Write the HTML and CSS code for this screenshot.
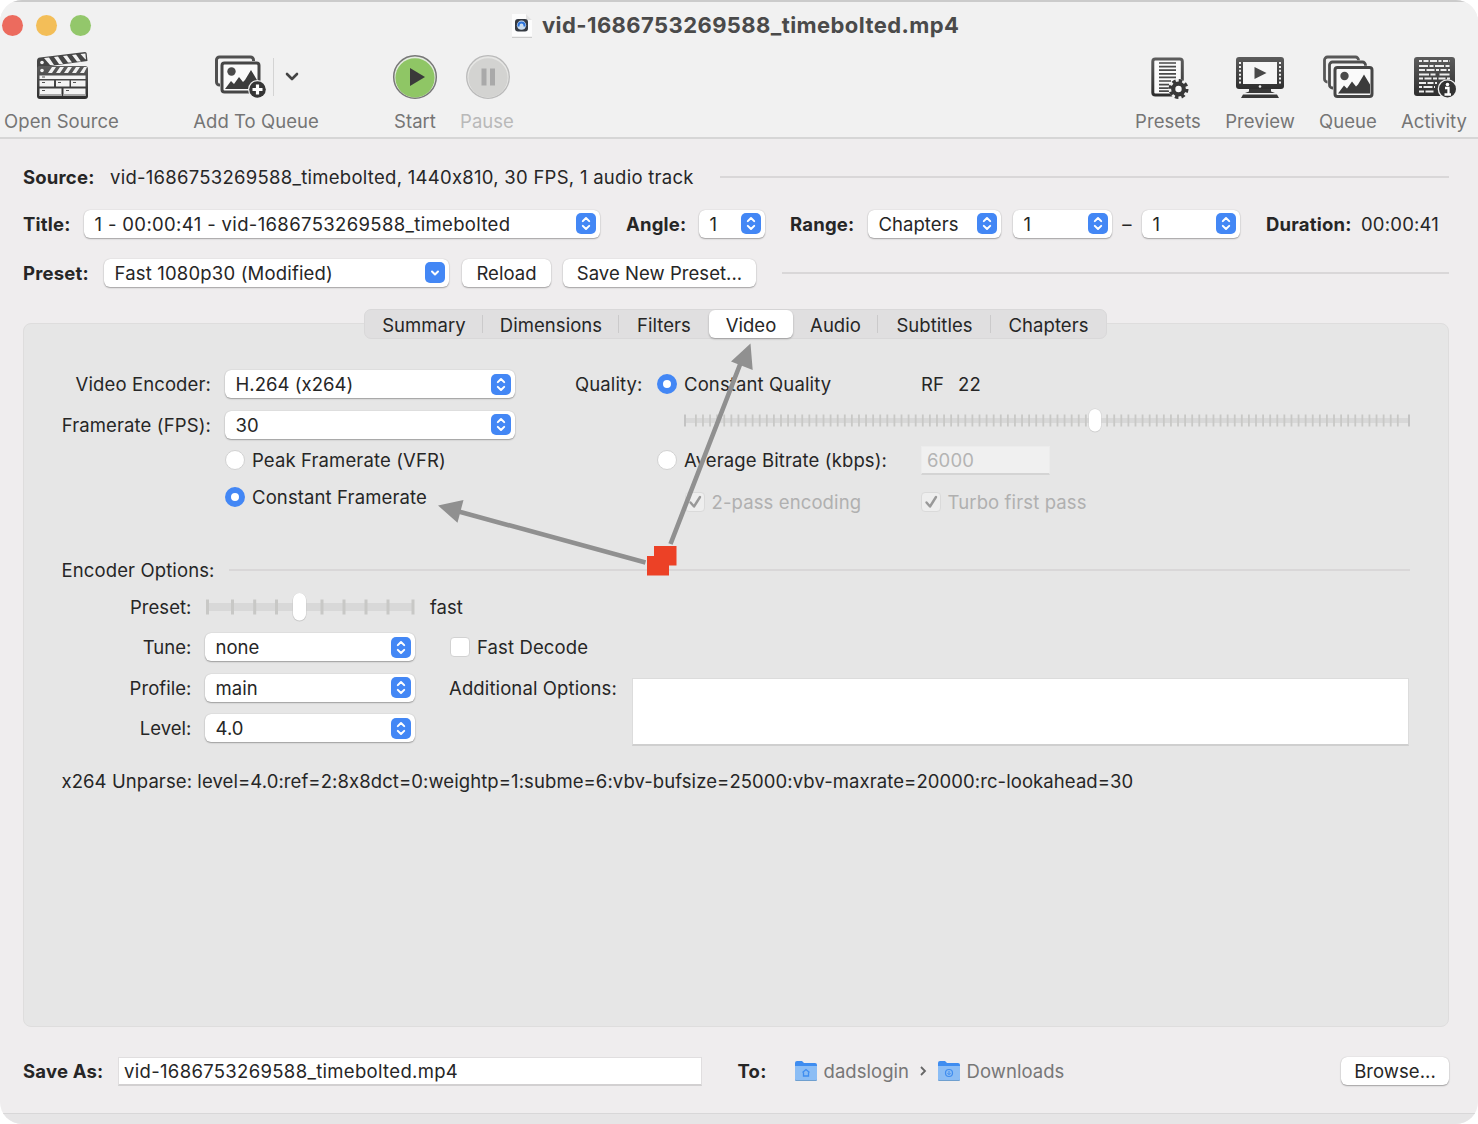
FILE: index.html
```
<!DOCTYPE html>
<html lang="en">
<head>
    <title>vid-1686753269588_timebolted.mp4</title>
    <meta charset="UTF-8">
    <link rel="stylesheet" href="styles.css">
</head>
<body>
    <!-- shared shapes -->
    <svg width="0" height="0" class="defs">
        <defs>
            <linearGradient id="dark" x1="0" y1="0" x2="0" y2="1">
                <stop offset="0" stop-color="#5c5c5c"/>
                <stop offset="1" stop-color="#2e2e2e"/>
            </linearGradient>
            <symbol id="updown" viewBox="0 0 20 20">
                <path d="M6.8 7.6 10 4.5l3.2 3.1M6.8 12.4 10 15.5l3.2-3.1" fill="none" stroke="#fff" stroke-width="2" stroke-linecap="round" stroke-linejoin="round"/>
            </symbol>
            <symbol id="down" viewBox="0 0 20 20">
                <path d="M7 9l3 3 3-3" fill="none" stroke="#fff" stroke-width="2" stroke-linecap="round" stroke-linejoin="round"/>
            </symbol>
            <symbol id="picture" viewBox="0 0 41 33">
                <rect width="41" height="33" rx="4" fill="#f1f1f1"/>
                <rect x="2" y="2" width="37" height="29" rx="2.5" fill="#fafafa" stroke="#464646" stroke-width="3"/>
                <circle cx="11.5" cy="10.5" r="4.2" fill="#4a4a4a"/>
                <path d="M5 28l6-8 3 3 5-7 4 5 2-2 6-10 6 10v9z" fill="#3c3c3c"/>
            </symbol>
            <symbol id="folder" viewBox="0 0 22 20">
                <path d="M0 2q0-2 2-2h5l2 2h11q2 0 2 2v14q0 2-2 2H2q-2 0-2-2z" fill="#3f8df0"/>
                <path d="M0 5h22v13q0 1.500-2 1.500H2q-2 0-2-1.500z" fill="#8bbdf5"/>
                <path d="M.5 19.500h21" stroke="#6f9fce"/>
            </symbol>
        </defs>
    </svg>

    <div class="window">
        <div class="toolbar">
            <div class="titlebar">
                <span class="light red"></span>
                <span class="light yellow"></span>
                <span class="light green"></span>
                <svg class="doc" width="22" height="25" viewBox="0 0 22 25">
                    <path d="M1 1h14l6 6v17H1z" fill="#fcfcfc"/>
                    <path d="M1 24.300h20" stroke="#c4c4c4"/>
                    <path d="M15 1v6h6" fill="#e4e4e4"/>
                    <rect x="4" y="6" width="13" height="12.500" rx="3" fill="#353a42"/>
                    <circle cx="10.500" cy="12.200" r="4.600" fill="#c9dcef"/>
                    <path d="M7.500 13.500v-1a3 3 0 0 1 6 0v1" fill="none" stroke="#2b72da" stroke-width="2"/>
                </svg>
                <h1>vid-1686753269588_timebolted.mp4</h1>
            </div>
            <div class="tools">
                <div class="tool open">
                    <svg width="54" height="50" viewBox="0 0 54 50">
                        <path d="M1 10q0-3 3-3.400L49 1q1.500 0 1.700 1.500L51.500 10 14 15v3H1z" fill="#454545"/>
                        <path d="M8 7l6 7h4l-5-7.500zM18 6l5 7h4l-5-7.500zM27 5l5 6.500h4l-5-7zM36 4l5 6.500h4l-5-7zM44.500 3l4.500 5 1 .5-.6-6z" fill="#f1f1f1"/>
                        <rect x="1" y="15" width="51" height="33" rx="3" fill="url(#dark)"/>
                        <path d="M12 22l4-6h4l-4 6zM20 22l4-6h4l-4 6zM28 22l4-6h4l-4 6zM36 22l4-6h4l-4 6zM44 22l4-6h3l-3 6z" fill="#f1f1f1"/>
                        <circle cx="6" cy="11.500" r="1.800" fill="#f1f1f1"/>
                        <circle cx="6" cy="19.500" r="1.800" fill="#f1f1f1"/>
                        <path d="M3.500 24.500h46v3.500h-46zM3.500 29.500H18v6H3.500zM20 29.500h13.500v6H20zM35 29.500h14.500v6H35zM3.500 37.500h22V45h-22zM27.500 37.500h22V45h-22z" fill="#f4f4f4"/>
                        <path d="M6 26h3M6 31.500h3M22 31.500h3M37 31.500h3M6 39.500h3M30 39.500h3" stroke="#555" />
                        <path d="M3.500 43h22v2h-22zM27.500 43h22v2h-22z" fill="#a8a8a8"/>
                    </svg>
                    <span>Open Source</span>
                </div>
                <div class="tool add">
                    <div class="split">
                        <svg width="54" height="46" viewBox="0 0 54 46">
                            <rect x="2.500" y="3" width="37" height="28" rx="3" fill="#f4f4f4" stroke="#505050" stroke-width="3"/>
                            <use href="#picture" x="6" y="7" width="41" height="33"/>
                            <circle cx="43.500" cy="35.500" r="9.500" fill="#f1f1f1"/>
                            <circle cx="43.500" cy="35.500" r="8.300" fill="#363636"/>
                            <path d="M43.500 30.500v10M38.500 35.500h10" stroke="#fff" stroke-width="3.200"/>
                        </svg>
                        <i class="divider"></i>
                        <svg width="14" height="10" viewBox="0 0 14 10">
                            <path d="M2 2l5 5 5-5" fill="none" stroke="#444" stroke-width="2.600" stroke-linecap="round" stroke-linejoin="round"/>
                        </svg>
                    </div>
                    <span>Add To Queue</span>
                </div>
                <div class="tool start">
                    <svg width="46" height="46" viewBox="0 0 46 46">
                        <circle cx="23" cy="23" r="21.300" fill="#e4ebdf" stroke="#777" stroke-width="1.500"/>
                        <circle cx="23" cy="23.800" r="19.600" fill="#8fc665"/>
                        <path d="M18 14v18l15-9z" fill="#3a3a3a"/>
                    </svg>
                    <span>Start</span>
                </div>
                <div class="tool pause">
                    <svg width="46" height="46" viewBox="0 0 46 46">
                        <circle cx="23" cy="23" r="21.300" fill="#e6e6e4" stroke="#bababa" stroke-width="1.300"/>
                        <circle cx="23" cy="23.800" r="19.600" fill="#d3d3d1"/>
                        <path d="M16.500 14.500h5v17h-5zM25 14.500h5v17h-5z" fill="#a9a9a9"/>
                    </svg>
                    <span>Pause</span>
                </div>
                <div class="tool presets">
                    <svg width="40" height="46" viewBox="0 0 40 46">
                        <rect x="2.800" y="5" width="29.500" height="36" rx="2.500" fill="#fafafa" stroke="url(#dark)" stroke-width="3"/>
                        <path d="M9 9h17M9 12.600h17M9 16.200h17M9 19.800h17M9 23.400h17M9 27h12M9 30.600h10M9 34.200h10M9 37.200h10" stroke="#4a4a4a" stroke-width="1.700"/>
                        <circle cx="28.500" cy="35" r="10" fill="#f1f1f1"/>
                        <circle cx="28.500" cy="35" r="8.300" fill="none" stroke="#383838" stroke-width="3.400" stroke-dasharray="3.500 3.020"/>
                        <circle cx="28.500" cy="35" r="5.300" fill="#fafafa" stroke="#383838" stroke-width="4.200"/>
                    </svg>
                    <span>Presets</span>
                </div>
                <div class="tool preview">
                    <svg width="50" height="46" viewBox="0 0 50 46">
                        <rect x="1" y="3" width="48" height="32" rx="3" fill="url(#dark)"/>
                        <rect x="8" y="8" width="34" height="22" fill="#f6f6f6"/>
                        <path d="M5 8v23M45 8v23" stroke="#f1f1f1" stroke-width="2" stroke-dasharray="2 1.900"/>
                        <path d="M19.500 13v12l12-6z" fill="#484848"/>
                        <circle cx="25" cy="32.500" r="1.300" fill="#eee"/>
                        <path d="M14 35h22v2.500l4 1.500H10l4-1.500zM8 40.500h34l2 3.500H6z" fill="#383838"/>
                    </svg>
                    <span>Preview</span>
                </div>
                <div class="tool queue">
                    <svg width="52" height="46" viewBox="0 0 52 46">
                        <rect x="2.500" y="3" width="34" height="25" rx="3" fill="#f4f4f4" stroke="#585858" stroke-width="2.800"/>
                        <rect x="5.500" y="6.200" width="40" height="29" rx="4" fill="#f1f1f1"/>
                        <rect x="7.500" y="8" width="36" height="26" rx="3" fill="#f4f4f4" stroke="#4e4e4e" stroke-width="2.800"/>
                        <use href="#picture" x="11" y="11.500" width="41" height="33"/>
                    </svg>
                    <span>Queue</span>
                </div>
                <div class="tool activity">
                    <svg width="46" height="46" viewBox="0 0 46 46">
                        <rect x="2" y="3" width="41" height="39" rx="3" fill="url(#dark)"/>
                        <path d="M7 7h31" stroke="#eee" stroke-width="1.800" stroke-dasharray="3 1.500 5 1.500 7 1.500"/>
                        <path d="M7 12h31" stroke="#eee" stroke-width="1.800" stroke-dasharray="9 1.500 4 1.500"/>
                        <path d="M7 16h31" stroke="#eee" stroke-width="1.800" stroke-dasharray="6 1.500 8 1.500 3 1.500"/>
                        <path d="M7 20.500h31" stroke="#eee" stroke-width="1.800" stroke-dasharray="10 1.500 5 4"/>
                        <path d="M7 24.500h31" stroke="#eee" stroke-width="1.800" stroke-dasharray="4 1.500 7 1.500"/>
                        <path d="M7 29h18" stroke="#eee" stroke-width="1.800" stroke-dasharray="7 1.500 6 1.500"/>
                        <path d="M7 33h16" stroke="#eee" stroke-width="1.800" stroke-dasharray="3 1.500 9 1.500"/>
                        <path d="M7 37.500h16" stroke="#eee" stroke-width="1.800" stroke-dasharray="5 1.500 8 1.500"/>
                        <circle cx="35.500" cy="35" r="9.800" fill="#f1f1f1"/>
                        <circle cx="35.500" cy="35" r="8.500" fill="#333"/>
                        <circle cx="35.500" cy="30.500" r="1.800" fill="#fff"/>
                        <path d="M33 34h3.500v6M32.500 40.500h6.500" stroke="#fff" stroke-width="2.300" fill="none"/>
                    </svg>
                    <span>Activity</span>
                </div>
            </div>
        </div>

        <div class="row source">
            <b>Source:</b>
            <span class="source-text">vid-1686753269588_timebolted, 1440x810, 30 FPS, 1 audio track</span>
            <hr>
        </div>
        <div class="row title">
            <b>Title:</b>
            <div class="select w-title">1 - 00:00:41 - vid-1686753269588_timebolted<svg><use href="#updown"/></svg></div>
            <b class="l-angle">Angle:</b>
            <div class="select w-angle">1<svg><use href="#updown"/></svg></div>
            <b class="l-range">Range:</b>
            <div class="select w-range">Chapters<svg><use href="#updown"/></svg></div>
            <div class="select w-from">1<svg><use href="#updown"/></svg></div>
            <span class="dash">–</span>
            <div class="select w-to">1<svg><use href="#updown"/></svg></div>
            <b class="l-duration">Duration:</b>
            <span class="duration">00:00:41</span>
        </div>
        <div class="row preset">
            <b>Preset:</b>
            <div class="select w-preset">Fast 1080p30 (Modified)<svg><use href="#down"/></svg></div>
            <div class="button reload">Reload</div>
            <div class="button save-new">Save New Preset...</div>
            <hr>
        </div>

        <div class="tabs">
            <span class="t1">Summary</span>
            <span class="t2">Dimensions</span>
            <span class="t3">Filters</span>
            <span class="t4 active">Video</span>
            <span class="t5">Audio</span>
            <span class="t6">Subtitles</span>
            <span class="t7">Chapters</span>
        </div>

        <div class="panel">
            <div class="video">
                <div class="left">
                    <div class="field"><label>Video Encoder:</label><div class="select">H.264 (x264)<svg><use href="#updown"/></svg></div></div>
                    <div class="field"><label>Framerate (FPS):</label><div class="select">30<svg><use href="#updown"/></svg></div></div>
                    <div class="choice vfr"><i class="radio"></i>Peak Framerate (VFR)</div>
                    <div class="choice cfr"><i class="radio on"></i>Constant Framerate</div>
                </div>
                <div class="right">
                    <div class="choice cq"><label>Quality:</label><i class="radio on"></i><span class="name">Constant Quality</span><span class="rf">RF</span><span>22</span></div>
                    <svg class="slider" width="726" height="34" viewBox="0 0 726 34">
                        <path d="M0 16.500h726" stroke="#d8d8d8" stroke-width="5"/>
                        <path d="M1 10.500v12M725 10.500v12" stroke="#c3c3c3" stroke-width="2"/>
                        <path d="M11 16.500h704" stroke="#c8c8c6" stroke-width="12" stroke-dasharray="1.800 5.290"/>
                        <rect x="404.500" y="4.500" width="13" height="24" rx="6.500" fill="#cfcfcf"/>
                        <rect x="405" y="5" width="12" height="22.500" rx="6" fill="#fff"/>
                    </svg>
                    <div class="choice abr"><label></label><i class="radio"></i><span class="name">Average Bitrate (kbps):</span><span class="input disabled">6000</span></div>
                    <div class="choice passes">
                        <i class="check"><svg width="20" height="20" viewBox="0 0 20 20"><path d="M5.500 10.500l3.500 4 6-9.500" fill="none" stroke="#999" stroke-width="2.400" stroke-linecap="round" stroke-linejoin="round"/></svg></i>
                        <span class="name">2-pass encoding</span>
                        <i class="check"><svg width="20" height="20" viewBox="0 0 20 20"><path d="M5.500 10.500l3.500 4 6-9.500" fill="none" stroke="#999" stroke-width="2.400" stroke-linecap="round" stroke-linejoin="round"/></svg></i>
                        <span>Turbo first pass</span>
                    </div>
                </div>
            </div>

            <div class="heading"><span>Encoder Options:</span><hr></div>

            <div class="options">
                <div class="left">
                    <div class="field"><label>Preset:</label>
                        <svg class="steps" width="211" height="30" viewBox="0 0 211 30">
                            <path d="M1 15h208" stroke="#d8d8d8" stroke-width="8"/>
                            <path d="M2.500 7.500v15M27.500 7.500v15M49.700 7.500v15M71.500 7.500v15M117 7.500v15M139 7.500v15M161 7.500v15M183 7.500v15M208 7.500v15" stroke="#c8c8c6" stroke-width="3"/>
                            <rect x="87.500" y="1" width="14" height="28.500" rx="7" fill="#cacaca"/>
                            <rect x="88" y="1" width="13" height="27.500" rx="6.500" fill="#fff"/>
                        </svg>
                    </div>
                    <div class="field"><label>Tune:</label><div class="select">none<svg><use href="#updown"/></svg></div></div>
                    <div class="field"><label>Profile:</label><div class="select">main<svg><use href="#updown"/></svg></div></div>
                    <div class="field"><label>Level:</label><div class="select">4.0<svg><use href="#updown"/></svg></div></div>
                </div>
                <div class="right">
                    <div class="speed">fast</div>
                    <div class="choice decode"><i class="check"></i>Fast Decode</div>
                    <div class="additional"><label>Additional Options:</label><div class="textarea"></div></div>
                </div>
            </div>

            <div class="unparse">x264 Unparse: level=4.0:ref=2:8x8dct=0:weightp=1:subme=6:vbv-bufsize=25000:vbv-maxrate=20000:rc-lookahead=30</div>
        </div>

        <div class="row save">
            <b>Save As:</b>
            <span class="input filename">vid-1686753269588_timebolted.mp4</span>
            <b class="l-to">To:</b>
            <svg class="folder" width="22" height="20" viewBox="0 0 22 20">
                <use href="#folder" width="22" height="20"/>
                <path d="M7.500 11.500 11 8.500l3.500 3M8.500 11.500v3.500h5v-3.500" fill="none" stroke="#3f8df0" stroke-width="1.300"/>
            </svg>
            <span class="crumb user">dadslogin</span>
            <svg class="arrow" width="8" height="12" viewBox="0 0 8 12"><path d="M2 2l4 4-4 4" fill="none" stroke="#666" stroke-width="1.800"/></svg>
            <svg class="folder" width="22" height="20" viewBox="0 0 22 20">
                <use href="#folder" width="22" height="20"/>
                <circle cx="11" cy="12" r="3.500" fill="none" stroke="#3f8df0" stroke-width="1.200"/>
                <path d="M11 10v3.500M9.500 12.200l1.500 1.500 1.500-1.500" fill="none" stroke="#3f8df0"/>
            </svg>
            <span class="crumb">Downloads</span>
            <div class="button browse">Browse...</div>
        </div>
        <div class="bottom"></div>

        <!-- pointers to the Video tab and Constant Framerate -->
        <svg class="pointers" width="1478" height="1124" viewBox="0 0 1478 1124">
            <path d="M670.500 544 741 362M645.500 562.500 455 510.500" stroke="#909090" stroke-width="4.600"/>
            <path d="M750.500 343.500 731 361.500 752.700 370zM438 505.500l25.500-5.500-6 22.700z" fill="#909090"/>
            <path d="M654 546h22.500v19.500H669v10h-22V556h7z" fill="#ec4126"/>
        </svg>
    </div>
</body>
</html>
```
FILE: styles.css
```
* {
    box-sizing: border-box;
}
body {
    margin: 0;
    background: #fff;
    font-family: Inter, "Liberation Sans", sans-serif;
    font-size: 18.5px;
    font-feature-settings: "calt" 0;
    letter-spacing: 0.05px;
    color: #262626;
    line-height: 28px;
    white-space: nowrap;
}
.defs {
    display: block;
}
.window {
    position: relative;
    width: 1478px;
    height: 1124px;
    overflow: hidden;
    border-radius: 22px;
    background: #efedee;
}
b {
    font-weight: 700;
    letter-spacing: 0.2px;
}
hr {
    flex: 1;
    height: 2px;
    margin: 0;
    border: 0;
    background: #d9d7d8;
}

/* toolbar */
.toolbar {
    height: 139px;
    background: #f1f1f1;
    border-top: 2px solid #cbcbcb;
    border-bottom: 2px solid #d6d6d6;
}
.titlebar {
    display: flex;
    align-items: center;
    height: 47px;
    padding-left: 2px;
}
.light {
    width: 21px;
    height: 21px;
    margin-right: 13px;
    border-radius: 50%;
}
.red { background: #ec6b5e; }
.yellow { background: #f3be58; }
.green { background: #93c76b; }
.doc {
    margin-left: 407px;
}
h1 {
    margin: 0 0 0 9px;
    font-size: 22px;
    font-weight: 700;
    letter-spacing: 0.42px;
    line-height: 26px;
    padding-bottom: 1px;
    color: #4a4a4a;
}
.tools {
    display: flex;
}
.tool {
    display: flex;
    flex-direction: column;
    align-items: center;
    height: 87px;
    color: #757575;
}
.tool svg {
    flex: none;
}
.tool > svg, .split {
    height: 50px;
    margin-top: 3px;
}
.tool span {
    margin-top: 5px;
}
.split {
    display: flex;
    align-items: center;
}
.divider {
    width: 1px;
    height: 38px;
    margin: 0 11px 0 5px;
    background: #d4d4d4;
}
.open { width: 123px; }
.tool.open svg {
    margin: 2px 0 1px 2px;
}
.add { width: 124px; margin-left: 71px; }
.start { width: 46px; margin-left: 74px; }
.pause { width: 54px; margin-left: 22px; }
.pause span { color: #b9b9b9; }
.pause svg { margin-left: 2px; }
.presets { width: 68px; margin-left: 620px; }
.presets svg { margin-left: 3px; }
.preview { width: 70px; margin-left: 23px; }
.queue { width: 60px; margin-left: 23px; }
.activity { width: 68px; margin-left: 22px; }
.activity svg { margin-left: 2px; }

/* controls */
.select, .button {
    height: 28px;
    border-radius: 6px;
    background: #fff;
    box-shadow: 0 0 1px rgba(0,0,0,.25), 0 1px 1.5px rgba(0,0,0,.3);
}
.select {
    display: flex;
    align-items: center;
    justify-content: space-between;
    padding: 0 4px 0 10.5px;
}
.select svg {
    width: 20px;
    height: 21px;
    border-radius: 5px;
    background: #4387f5;
}
.button {
    text-align: center;
}
.input {
    height: 29px;
    padding-left: 5px;
    background: #fff;
    border: 1px solid #e0dedf;
    border-bottom: 2px solid #d2d0d1;
    line-height: 26px;
}
.input.disabled {
    width: 129px;
    background: #f0f0f0;
    border-color: #ececec #ececec #d4d4d4;
    color: #b4b4b4;
}
.radio, .check {
    flex: none;
    width: 20px;
    height: 20px;
    background: #fff;
    border: 1px solid #d2d2d2;
}
.radio {
    border-radius: 50%;
}
.radio.on {
    border: 6.5px solid #4387f5;
}
.check {
    border-radius: 4px;
}
.check svg {
    display: block;
    margin: -1px;
}
.passes .check {
    background: #eeeeee;
    border-color: #dadada;
}

/* rows above the tabs */
.row {
    display: flex;
    align-items: center;
    padding: 0 29px 0 23px;
}
.source { height: 75px; }
.source b { width: 87px; }
.source-text { width: 610px; letter-spacing: 0.27px; }
.title { height: 19px; }
.title b { width: 61px; }
.w-title { width: 516px; letter-spacing: 0.35px; }
.title .l-angle { width: 73px; margin-left: 26px; }
.w-angle { width: 66px; }
.title .l-range { width: 78px; margin-left: 25px; }
.w-range { width: 133px; }
.w-from { width: 99px; margin-left: 12px; }
.dash { width: 30px; text-align: center; }
.w-to { width: 98px; }
.title .l-duration { width: 95px; margin-left: 26px; }
.duration { letter-spacing: 0.2px; }
.preset { height: 79px; }
.preset b { width: 81px; }
.w-preset { width: 345px; letter-spacing: 0.18px; }
.reload { width: 89px; margin-left: 13px; }
.save-new { width: 193px; margin: 0 26px 0 12px; }

/* tabs */
.tabs {
    position: relative;
    display: flex;
    width: 743px;
    height: 30px;
    margin: -3px 0 -16px 364px;
    background: #e0dfe0;
    border: 1px solid #d9d8d9;
    border-radius: 7px;
    z-index: 1;
}
.tabs span {
    text-align: center;
    line-height: 30px;
    background: linear-gradient(#cbcacb, #cbcacb) right center / 1px 18px no-repeat;
}
.tabs .t1 { width: 118px; }
.tabs .t2 { width: 136px; }
.tabs .t3 { width: 90px; background: none; }
.tabs .t4 { width: 84px; }
.tabs .t5 { width: 85px; }
.tabs .t6 { width: 113px; }
.tabs .t7 { width: 115px; background: none; }
.tabs .active {
    height: 28px;
    background: #fff;
    border-radius: 6px;
    box-shadow: 0 1px 2px rgba(0,0,0,.3);
}

/* panel */
.panel {
    height: 704px;
    margin: 0 29px 0 23px;
    padding: 40px 38px 0 37.5px;
    background: #e6e6e6;
    border: 1px solid #dedddd;
    border-radius: 8px;
}
.video {
    display: flex;
    height: 159px;
}
.field {
    display: flex;
    align-items: center;
    height: 40.5px;
}
.field label {
    text-align: right;
}
.choice {
    display: flex;
    align-items: center;
    letter-spacing: 0.12px;
}
.choice .radio {
    margin-right: 7px;
}
.video .left { width: 497.5px; }
.video .left label { width: 149.5px; margin-right: 14px; letter-spacing: 0.12px; }
.video .left .select { width: 290px; }
.left .choice { padding-left: 163.5px; }
.vfr { height: 30px; }
.cfr { height: 43px; }
.cq { height: 40px; }
.slider { display: block; margin-left: 126.5px; }
.abr { height: 44px; }
.right .choice label {
    width: 85px;
    margin-right: 14.5px;
    text-align: right;
}
.right .name { width: 237px; }
.rf { width: 37px; }
.passes {
    height: 40px;
    padding-left: 127px;
    color: #b0b0b0;
}
.passes .check { margin-right: 7px; }
.passes .name { width: 209px; }
.heading {
    display: flex;
    align-items: center;
    height: 28px;
    margin-top: 33px;
    letter-spacing: 0.12px;
}
.heading span { width: 167px; }
.options {
    display: flex;
    height: 165px;
    margin-top: 2.5px;
}
.options .left { width: 387.5px; }
.options .left label { width: 130px; margin-right: 13.5px; }
.options .left .select { width: 210px; }
.speed {
    height: 40px;
    margin-left: -19px;
    line-height: 40px;
}
.decode { height: 41px; }
.decode .check { margin: 0 7px 0 1px; }
.additional { display: flex; }
.additional label { width: 183px; line-height: 40px; letter-spacing: 0.12px; }
.textarea {
    width: 777px;
    height: 68px;
    margin-top: 10.5px;
    background: #fff;
    border: 1px solid #dcdcdc;
    border-bottom: 2px solid #cfcfcf;
}
.unparse { margin-top: 15px; letter-spacing: 0.085px; }

/* footer */
.save { height: 86px; padding-top: 2px; }
.save b { width: 95px; }
.filename { width: 584px; letter-spacing: 0.32px; }
.save .l-to { width: 57px; margin-left: 35.5px; }
.folder { flex: none; }
.crumb { margin-left: 7px; color: #777; }
.user { width: 88px; }
.arrow { flex: none; margin: 0 11px 0 7px; }
.browse { width: 108px; margin-left: auto; }
.bottom {
    height: 11px;
    background: #e6e5e6;
    border-top: 1px solid #d8d7d8;
}
.pointers {
    position: absolute;
    left: 0;
    top: 0;
    z-index: 2;
}
```
